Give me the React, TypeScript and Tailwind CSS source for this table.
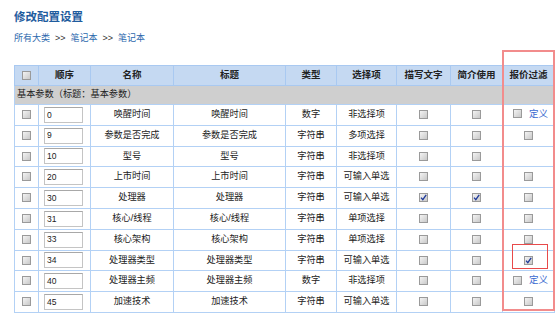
import React from "react";

type Row = {
  order: string;
  name: string;
  type: string;
  sel: string;
  desc?: boolean;
  intro?: boolean;
  filter: "none" | "cb" | "def" | "checked";
};

const rows: Row[] = [
  { order: "0", name: "唤醒时间", type: "数字", sel: "非选择项", filter: "def" },
  { order: "9", name: "参数是否完成", type: "字符串", sel: "多项选择", filter: "cb" },
  { order: "10", name: "型号", type: "字符串", sel: "非选择项", filter: "none" },
  { order: "20", name: "上市时间", type: "字符串", sel: "可输入单选", filter: "cb" },
  { order: "30", name: "处理器", type: "字符串", sel: "可输入单选", desc: true, intro: true, filter: "cb" },
  { order: "31", name: "核心/线程", type: "字符串", sel: "单项选择", filter: "cb" },
  { order: "33", name: "核心架构", type: "字符串", sel: "单项选择", filter: "cb" },
  { order: "34", name: "处理器类型", type: "字符串", sel: "可输入单选", filter: "checked" },
  { order: "40", name: "处理器主频", type: "数字", sel: "非选择项", filter: "def" },
  { order: "45", name: "加速技术", type: "字符串", sel: "可输入单选", filter: "cb" },
];

function Cb({ checked = false }: { checked?: boolean }) {
  return (
    <span className="inline-flex h-[9px] w-[9px] items-center justify-center border border-[#9a9a9a] bg-gradient-to-br from-[#f4f4f4] to-[#c9c9c9] align-middle">
      {checked && (
        <svg width="7" height="7" viewBox="0 0 7 7">
          <path d="M1 3.6 L2.8 5.6 L6.2 0.8" fill="none" stroke="#1f3a9a" strokeWidth="1.3" />
        </svg>
      )}
    </span>
  );
}

const th = "border border-[#a9c9f1] font-bold text-[9.5px] text-[#222] text-center";
const td = "border border-[#b3d1f5] text-[9.2px] text-[#222] text-center";

export default function App() {
  return (
    <div
      className="min-h-[314px] w-[558px] bg-white pl-[14px] pt-[9px]"
      style={{ fontFamily: '"Liberation Sans", "Noto Sans CJK SC", sans-serif' }}
    >
      <div className="text-[11.5px] font-bold leading-[17px] text-[#1f5c9e]">修改配置设置</div>
      <div className="mt-[5px] flex items-center text-[9px] leading-[14px] text-[#333]">
        <span className="text-[#2c68ad]">所有大类</span>
        <span className="mx-[5px]">&gt;&gt;</span>
        <span className="text-[#2c68ad]">笔记本</span>
        <span className="mx-[5px]">&gt;&gt;</span>
        <span className="text-[#2c68ad]">笔记本</span>
      </div>
      <div className="relative mt-[20px] w-[540px]">
        <table className="w-[540px] table-fixed border-collapse">
          <colgroup>
            <col className="w-[24px]" />
            <col className="w-[52px]" />
            <col className="w-[83px]" />
            <col className="w-[112px]" />
            <col className="w-[51px]" />
            <col className="w-[60px]" />
            <col className="w-[54px]" />
            <col className="w-[52px]" />
            <col className="w-[52px]" />
          </colgroup>
          <thead>
            <tr className="h-[20px] bg-[#c5d9f2]">
              <th className={th}>
                <Cb />
              </th>
              <th className={th}>顺序</th>
              <th className={th}>名称</th>
              <th className={th}>标题</th>
              <th className={th}>类型</th>
              <th className={th}>选择项</th>
              <th className={th}>描写文字</th>
              <th className={th}>简介使用</th>
              <th className={th}>报价过滤</th>
            </tr>
          </thead>
          <tbody>
            <tr className="h-[19px] bg-[#cfcfcf]">
              <td colSpan={9} className="border border-[#b3d1f5] pl-[2px] text-left text-[9.2px] text-[#222]">
                基本参数（标题：基本参数）
              </td>
            </tr>
            {rows.map((r) => (
              <tr key={r.order} className="h-[20.8px]">
                <td className={td}>
                  <Cb />
                </td>
                <td className={td + " text-left"}>
                  <div className="ml-[5px] flex h-[16px] w-[39px] items-center border border-[#c4c4c4] border-t-[#a8a8a8] pl-[2px] text-[8.5px] text-[#222]">
                    {r.order}
                  </div>
                </td>
                <td className={td}>{r.name}</td>
                <td className={td}>{r.name}</td>
                <td className={td}>{r.type}</td>
                <td className={td}>{r.sel}</td>
                <td className={td}>
                  <Cb checked={!!r.desc} />
                </td>
                <td className={td}>
                  <Cb checked={!!r.intro} />
                </td>
                <td className={td}>
                  {r.filter === "cb" && <Cb />}
                  {r.filter === "checked" && <Cb checked />}
                  {r.filter === "def" && (
                    <span className="inline-flex items-center gap-[7px] pl-[4px]">
                      <Cb />
                      <span className="text-[9.5px] text-[#3a6ad0]">定义</span>
                    </span>
                  )}
                </td>
              </tr>
            ))}
          </tbody>
        </table>
        <div className="pointer-events-none absolute left-[488px] top-[-15px] h-[261px] w-[53px] border-2 border-[#f28c8c]" />
        <div className="pointer-events-none absolute left-[498px] top-[179px] h-[25px] w-[36px] border-[1.5px] border-[#e84a4a]" />
      </div>
    </div>
  );
}
